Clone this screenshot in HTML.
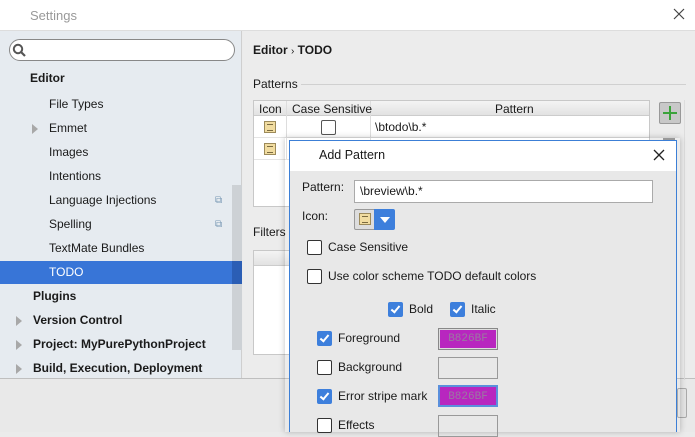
<!DOCTYPE html>
<html><head><style>
*{margin:0;padding:0;box-sizing:border-box}
body{width:695px;height:432px;overflow:hidden;background:#ebebeb;font-family:"Liberation Sans","DejaVu Sans",sans-serif;font-size:12px;color:#1a1a1a;position:relative}
.a{position:absolute}
.t{position:absolute;white-space:nowrap;line-height:15px}
.b{font-weight:bold}
.cb{position:absolute;width:15px;height:15px;border:1px solid #333;border-radius:2px;background:#fff}
.cc{position:absolute;width:15px;height:15px;border-radius:2px;background:#3d7fdc}
.cc:after{content:"";position:absolute;left:5px;top:2px;width:3px;height:7px;border:solid #fff;border-width:0 2px 2px 0;transform:rotate(40deg)}
.ic{position:absolute;width:12px;height:12px;background:#f1dca0;border:1px solid #9c8a5a}
.ic:before{content:"";position:absolute;left:2px;top:2px;width:6px;height:5px;border-top:1px solid #7a6a40;border-bottom:1px solid #7a6a40}
.sw{position:absolute;width:60px;height:22px;border:1px solid #999;font-family:"Liberation Mono",monospace;font-size:11px;color:#9a7aa0;text-align:center;line-height:20px}
.arr{position:absolute;width:0;height:0;border-left:6px solid #a8a8a8;border-top:5px solid transparent;border-bottom:5px solid transparent}
</style></head><body>
<div class="a" style="left:0;top:0;width:695px;height:31px;background:#fff;border-bottom:1px solid #ddd"></div>
<div class="t" style="left:30px;top:8px;color:#999;font-size:13px">Settings</div>
<svg class="a" style="left:673px;top:8px" width="12" height="12"><path d="M1 1L11 11M11 1L1 11" stroke="#444" stroke-width="1.2"/></svg>
<div class="a" style="left:0;top:31px;width:242px;height:347px;background:#e6ebf0;border-right:1px solid #cfcfcf"></div>
<div class="a" style="left:9px;top:39px;width:226px;height:22px;background:#fff;border:1px solid #888;border-radius:11px"></div>
<svg class="a" style="left:12px;top:43px" width="14" height="14"><circle cx="6" cy="6" r="4.2" stroke="#555" stroke-width="2" fill="none"/><line x1="9" y1="9" x2="13" y2="13" stroke="#555" stroke-width="2.2"/></svg>
<div class="a" style="left:232px;top:185px;width:10px;height:165px;background:#cdd1d5"></div>
<div class="a" style="left:0;top:261px;width:242px;height:23px;background:#3875d7"></div>
<div class="a" style="left:232px;top:261px;width:10px;height:23px;background:#2b5eb5"></div>
<div class="t b" style="left:30px;top:71px">Editor</div>
<div class="t" style="left:49px;top:97px">File Types</div>
<div class="arr" style="left:32px;top:124px"></div>
<div class="t" style="left:49px;top:121px">Emmet</div>
<div class="t" style="left:49px;top:145px">Images</div>
<div class="t" style="left:49px;top:169px">Intentions</div>
<div class="t" style="left:49px;top:193px">Language Injections</div>
<div class="t" style="left:49px;top:217px">Spelling</div>
<div class="t" style="left:215px;top:193px;color:#7a9ab5;font-size:10px">⧉</div>
<div class="t" style="left:215px;top:217px;color:#7a9ab5;font-size:10px">⧉</div>
<div class="t" style="left:49px;top:241px">TextMate Bundles</div>
<div class="t" style="left:49px;top:265px;color:#fff">TODO</div>
<div class="t b" style="left:33px;top:289px">Plugins</div>
<div class="arr" style="left:16px;top:316px"></div>
<div class="t b" style="left:33px;top:313px">Version Control</div>
<div class="arr" style="left:16px;top:340px"></div>
<div class="t b" style="left:33px;top:337px">Project: MyPurePythonProject</div>
<div class="arr" style="left:16px;top:364px"></div>
<div class="t b" style="left:33px;top:361px">Build, Execution, Deployment</div>
<div class="a" style="left:0;top:378px;width:695px;height:1px;background:#bfbfbf"></div>
<div class="a" style="left:0;top:379px;width:695px;height:53px;background:#e9e9e9"></div>
<div class="a" style="left:243px;top:31px;width:452px;height:347px;background:#ececec"></div>
<div class="t b" style="left:253px;top:43px">Editor <span style="font-weight:normal;font-size:10px">›</span> TODO</div>
<div class="t" style="left:253px;top:77px">Patterns</div>
<div class="a" style="left:301px;top:84px;width:385px;height:1px;background:#d0d0d0"></div>
<div class="a" style="left:253px;top:100px;width:397px;height:107px;background:#fff;border:1px solid #c8c8c8"></div>
<div class="a" style="left:254px;top:101px;width:395px;height:15px;background:linear-gradient(#f4f4f4,#e2e2e2);border-bottom:1px solid #ccc"></div>
<div class="a" style="left:286px;top:101px;width:1px;height:59px;background:#ddd"></div>
<div class="a" style="left:370px;top:101px;width:1px;height:59px;background:#ddd"></div>
<div class="a" style="left:254px;top:137px;width:395px;height:1px;background:#e4e4e4"></div>
<div class="a" style="left:254px;top:159px;width:395px;height:1px;background:#e4e4e4"></div>
<div class="t" style="left:259px;top:102px;font-size:12px">Icon</div>
<div class="t" style="left:292px;top:102px;font-size:12px">Case Sensitive</div>
<div class="t" style="left:495px;top:102px;font-size:12px">Pattern</div>
<div class="ic" style="left:264px;top:121px"></div>
<div class="ic" style="left:264px;top:143px"></div>
<div class="cb" style="left:321px;top:120px;border-color:#555"></div>
<div class="t" style="left:375px;top:120px">\btodo\b.*</div>
<div class="a" style="left:659px;top:102px;width:22px;height:22px;background:#c8c8c8;border:1px solid #999;border-radius:2px"></div>
<div class="a" style="left:663px;top:112px;width:14px;height:2px;background:#3aa33a"></div>
<div class="a" style="left:669px;top:106px;width:2px;height:14px;background:#3aa33a"></div>
<div class="a" style="left:663px;top:138px;width:12px;height:2px;background:#999"></div>
<div class="a" style="left:655px;top:100px;width:30px;height:280px;border-right:1px solid #ddd"></div>
<div class="t" style="left:253px;top:225px">Filters</div>
<div class="a" style="left:253px;top:250px;width:40px;height:105px;background:#fff;border:1px solid #c8c8c8"></div>
<div class="a" style="left:254px;top:251px;width:39px;height:15px;background:linear-gradient(#f4f4f4,#e2e2e2);border-bottom:1px solid #ccc"></div>
<div class="a" style="left:677px;top:388px;width:10px;height:30px;border:1px solid #aaa;border-radius:2px;background:#e4e4e4"></div>
<div class="a" style="left:285px;top:138px;width:395px;height:294px;box-shadow:0 0 6px rgba(0,0,0,.25)"></div>
<div class="a" style="left:289px;top:140px;width:388px;height:292px;background:#e8e8e8;border:1px solid #3c7fd6;border-bottom:none"></div>
<div class="a" style="left:290px;top:141px;width:386px;height:30px;background:#fff"></div>
<div class="t" style="left:319px;top:148px;font-size:12.5px">Add Pattern</div>
<svg class="a" style="left:653px;top:149px" width="12" height="12"><path d="M1 1L11 11M11 1L1 11" stroke="#222" stroke-width="1.3"/></svg>
<div class="t" style="left:302px;top:180px">Pattern:</div>
<div class="a" style="left:354px;top:180px;width:299px;height:23px;background:#fff;border:1px solid #aaa"></div>
<div class="t" style="left:360px;top:184px">\breview\b.*</div>
<div class="t" style="left:302px;top:209px">Icon:</div>
<div class="a" style="left:354px;top:209px;width:40px;height:21px;background:#ddd;border:1px solid #999;border-radius:2px"></div>
<div class="ic" style="left:359px;top:213px"></div>
<div class="a" style="left:374px;top:209px;width:21px;height:21px;background:#3d7fdc;border-radius:0 2px 2px 0"></div>
<div class="a" style="left:380px;top:217px;width:0;height:0;border-top:6px solid #fff;border-left:5px solid transparent;border-right:5px solid transparent"></div>
<div class="cb" style="left:307px;top:240px"></div>
<div class="t" style="left:328px;top:240px">Case Sensitive</div>
<div class="cb" style="left:307px;top:269px"></div>
<div class="t" style="left:328px;top:269px">Use color scheme TODO default colors</div>
<div class="cc" style="left:388px;top:302px"></div>
<div class="t" style="left:409px;top:302px">Bold</div>
<div class="cc" style="left:450px;top:302px"></div>
<div class="t" style="left:471px;top:302px">Italic</div>
<div class="cc" style="left:317px;top:331px"></div>
<div class="t" style="left:338px;top:331px">Foreground</div>
<div class="sw" style="left:438px;top:328px;background:#b826bf;border:1px solid #888;box-shadow:inset 0 0 0 1px #ddd">B826BF</div>
<div class="cb" style="left:317px;top:360px"></div>
<div class="t" style="left:338px;top:360px">Background</div>
<div class="sw" style="left:438px;top:357px"></div>
<div class="cc" style="left:317px;top:389px"></div>
<div class="t" style="left:338px;top:389px">Error stripe mark</div>
<div class="sw" style="left:438px;top:385px;background:#b826bf;border:2px solid #5a8fdc">B826BF</div>
<div class="cb" style="left:317px;top:418px"></div>
<div class="t" style="left:338px;top:418px">Effects</div>
<div class="sw" style="left:438px;top:415px"></div>
</body></html>
